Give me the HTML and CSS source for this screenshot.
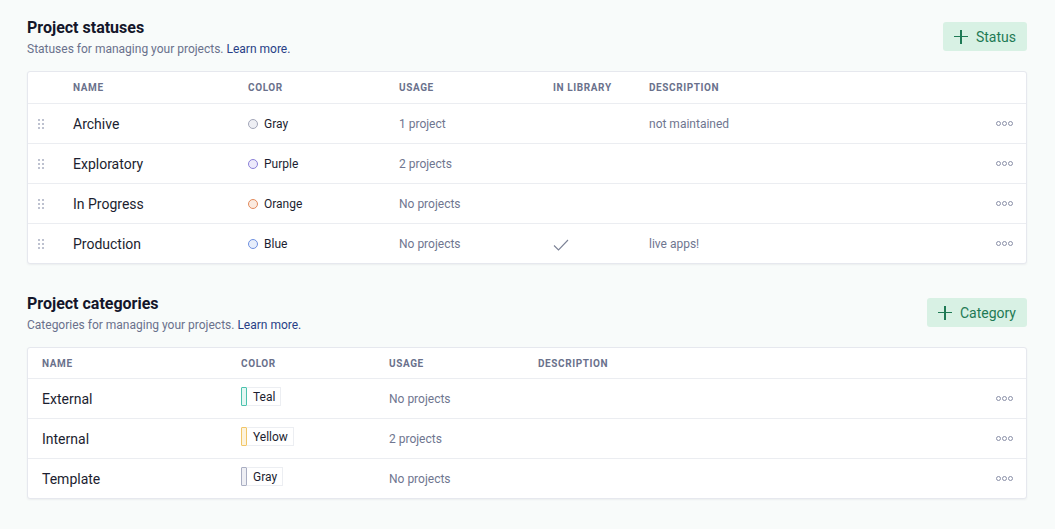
FILE: index.html
```html
<!DOCTYPE html>
<html lang="en">
<head>
  <meta charset="UTF-8">
  <title>Project settings</title>
  <link rel="stylesheet" href="styles.css">
</head>
<body>

  <section class="section">
    <div class="section-head">
      <div>
        <h2>Project statuses</h2>
        <p class="sub">Statuses for managing your projects. <a href="#">Learn more.</a></p>
      </div>
      <button class="add-btn"><span class="plus"></span>Status</button>
    </div>

    <div class="table statuses">
      <div class="row head">
        <span></span>
        <span>Name</span>
        <span>Color</span>
        <span>Usage</span>
        <span>In library</span>
        <span>Description</span>
        <span></span>
      </div>
      <div class="row">
        <span class="handle"><i></i><i></i><i></i><i></i><i></i><i></i></span>
        <span class="name">Archive</span>
        <span class="color"><b class="dot gray"></b>Gray</span>
        <span class="muted">1 project</span>
        <span></span>
        <span class="muted">not maintained</span>
        <span class="more"><i></i><i></i><i></i></span>
      </div>
      <div class="row">
        <span class="handle"><i></i><i></i><i></i><i></i><i></i><i></i></span>
        <span class="name">Exploratory</span>
        <span class="color"><b class="dot purple"></b>Purple</span>
        <span class="muted">2 projects</span>
        <span></span>
        <span class="muted"></span>
        <span class="more"><i></i><i></i><i></i></span>
      </div>
      <div class="row">
        <span class="handle"><i></i><i></i><i></i><i></i><i></i><i></i></span>
        <span class="name">In Progress</span>
        <span class="color"><b class="dot orange"></b>Orange</span>
        <span class="muted">No projects</span>
        <span></span>
        <span class="muted"></span>
        <span class="more"><i></i><i></i><i></i></span>
      </div>
      <div class="row">
        <span class="handle"><i></i><i></i><i></i><i></i><i></i><i></i></span>
        <span class="name">Production</span>
        <span class="color"><b class="dot blue"></b>Blue</span>
        <span class="muted">No projects</span>
        <span class="check"><svg width="16" height="12" viewBox="0 0 16 12"><path d="M1 6.5 L5.5 11 L15 1" fill="none" stroke="#7c8296" stroke-width="1.1"/></svg></span>
        <span class="muted">live apps!</span>
        <span class="more"><i></i><i></i><i></i></span>
      </div>
    </div>
  </section>

  <section class="section">
    <div class="section-head">
      <div>
        <h2>Project categories</h2>
        <p class="sub">Categories for managing your projects. <a href="#">Learn more.</a></p>
      </div>
      <button class="add-btn"><span class="plus"></span>Category</button>
    </div>

    <div class="table categories">
      <div class="row head">
        <span>Name</span>
        <span>Color</span>
        <span>Usage</span>
        <span>Description</span>
        <span></span>
      </div>
      <div class="row">
        <span class="name">External</span>
        <span><span class="tag"><b class="bar teal"></b><em>Teal</em></span></span>
        <span class="muted">No projects</span>
        <span></span>
        <span class="more"><i></i><i></i><i></i></span>
      </div>
      <div class="row">
        <span class="name">Internal</span>
        <span><span class="tag"><b class="bar yellow"></b><em>Yellow</em></span></span>
        <span class="muted">2 projects</span>
        <span></span>
        <span class="more"><i></i><i></i><i></i></span>
      </div>
      <div class="row">
        <span class="name">Template</span>
        <span><span class="tag"><b class="bar gray"></b><em>Gray</em></span></span>
        <span class="muted">No projects</span>
        <span></span>
        <span class="more"><i></i><i></i><i></i></span>
      </div>
    </div>
  </section>

</body>
</html>
```

FILE: styles.css
```css
* {
  margin: 0;
  padding: 0;
  box-sizing: border-box;
}
body {
  font-family: 'Roboto', 'Liberation Sans', sans-serif;
  background-color: #f8fbfa;
  color: #1c1e30;
  padding: 18px 28px 0 27px;
}
.section {
  margin-bottom: 30px;
}
.section-head {
  display: flex;
  justify-content: space-between;
  align-items: flex-start;
  margin-bottom: 13px;
}
h2 {
  font-size: 16px;
  font-weight: 700;
  color: #14162a;
  line-height: 20px;
}
.sub {
  font-size: 12px;
  color: #6a718c;
  margin-top: 3px;
  line-height: 17px;
}
.sub a {
  color: #283f86;
  text-decoration: none;
}
.add-btn {
  display: flex;
  align-items: center;
  height: 29px;
  margin-top: 4px;
  padding: 0 11px 0 11px;
  background-color: #d8f1e4;
  border: none;
  border-radius: 3px;
  color: #1f7a55;
  font-family: inherit;
  font-size: 14px;
  cursor: pointer;
}
.plus {
  position: relative;
  width: 14px;
  height: 14px;
  margin-right: 8px;
}
.plus::before, .plus::after {
  content: '';
  position: absolute;
  background: #1f7a55;
}
.plus::before {
  left: 0;
  top: 6.5px;
  width: 14px;
  height: 1.2px;
}
.plus::after {
  top: 0;
  left: 6.5px;
  width: 1.2px;
  height: 14px;
}
.table {
  background: #fff;
  border: 1px solid #e6e8ee;
  border-radius: 3px;
  box-shadow: 0 1px 2px rgba(30, 35, 60, 0.06);
}
.row {
  display: grid;
  align-items: center;
  height: 40px;
  border-top: 1px solid #ebedf1;
}
.row.head {
  height: 31px;
  border-top: none;
  font-size: 10px;
  font-weight: 700;
  letter-spacing: 0.06em;
  text-transform: uppercase;
  color: #6a718c;
}
.statuses .row {
  grid-template-columns: 45px 175px 151px 154px 96px 1fr 30px;
}
.categories .row {
  grid-template-columns: 199px 148px 149px 1fr 30px;
  padding-left: 14px;
}
.categories .row.head {
  height: 30px;
}
.name {
  font-size: 14px;
  color: #1c1e30;
}
.muted {
  font-size: 12px;
  color: #6f7690;
}
.color {
  display: flex;
  align-items: center;
  font-size: 12px;
  color: #1c1e30;
}
.dot {
  width: 10px;
  height: 10px;
  border-radius: 50%;
  border: 1.2px solid;
  margin-right: 6px;
}
.dot.gray { border-color: #a2a6b8; background: #eeeff4; }
.dot.purple { border-color: #8b80d8; background: #edeafb; }
.dot.orange { border-color: #e28a5c; background: #fbeadf; }
.dot.blue { border-color: #6e90e0; background: #e7eefb; }
.handle {
  display: grid;
  grid-template-columns: 2px 2px;
  gap: 2px 2px;
  width: 6px;
  margin-left: 10px;
}
.handle i {
  width: 2px;
  height: 2px;
  background: #a9aec0;
  border-radius: 1px;
}
.more {
  display: flex;
  gap: 1px;
}
.more i {
  width: 5px;
  height: 5px;
  border: 1.2px solid #8a90a8;
  border-radius: 50%;
}
.check {
  display: flex;
  padding-top: 2px;
}
.tag {
  display: inline-flex;
  align-items: stretch;
  height: 19px;
}
.bar {
  width: 6px;
  border: 1.4px solid;
  border-radius: 1px;
}
.bar.teal { border-color: #4cc2ad; background: #e3f7f3; }
.bar.yellow { border-color: #f1c668; background: #fdf3dc; }
.bar.gray { border-color: #a9aec2; background: #eeeff4; }
.tag em {
  font-style: normal;
  font-size: 12px;
  color: #1c1e30;
  border: 1px solid #eceef2;
  border-left: none;
  padding: 1px 5px 0 6px;
  line-height: 16px;
}
```
